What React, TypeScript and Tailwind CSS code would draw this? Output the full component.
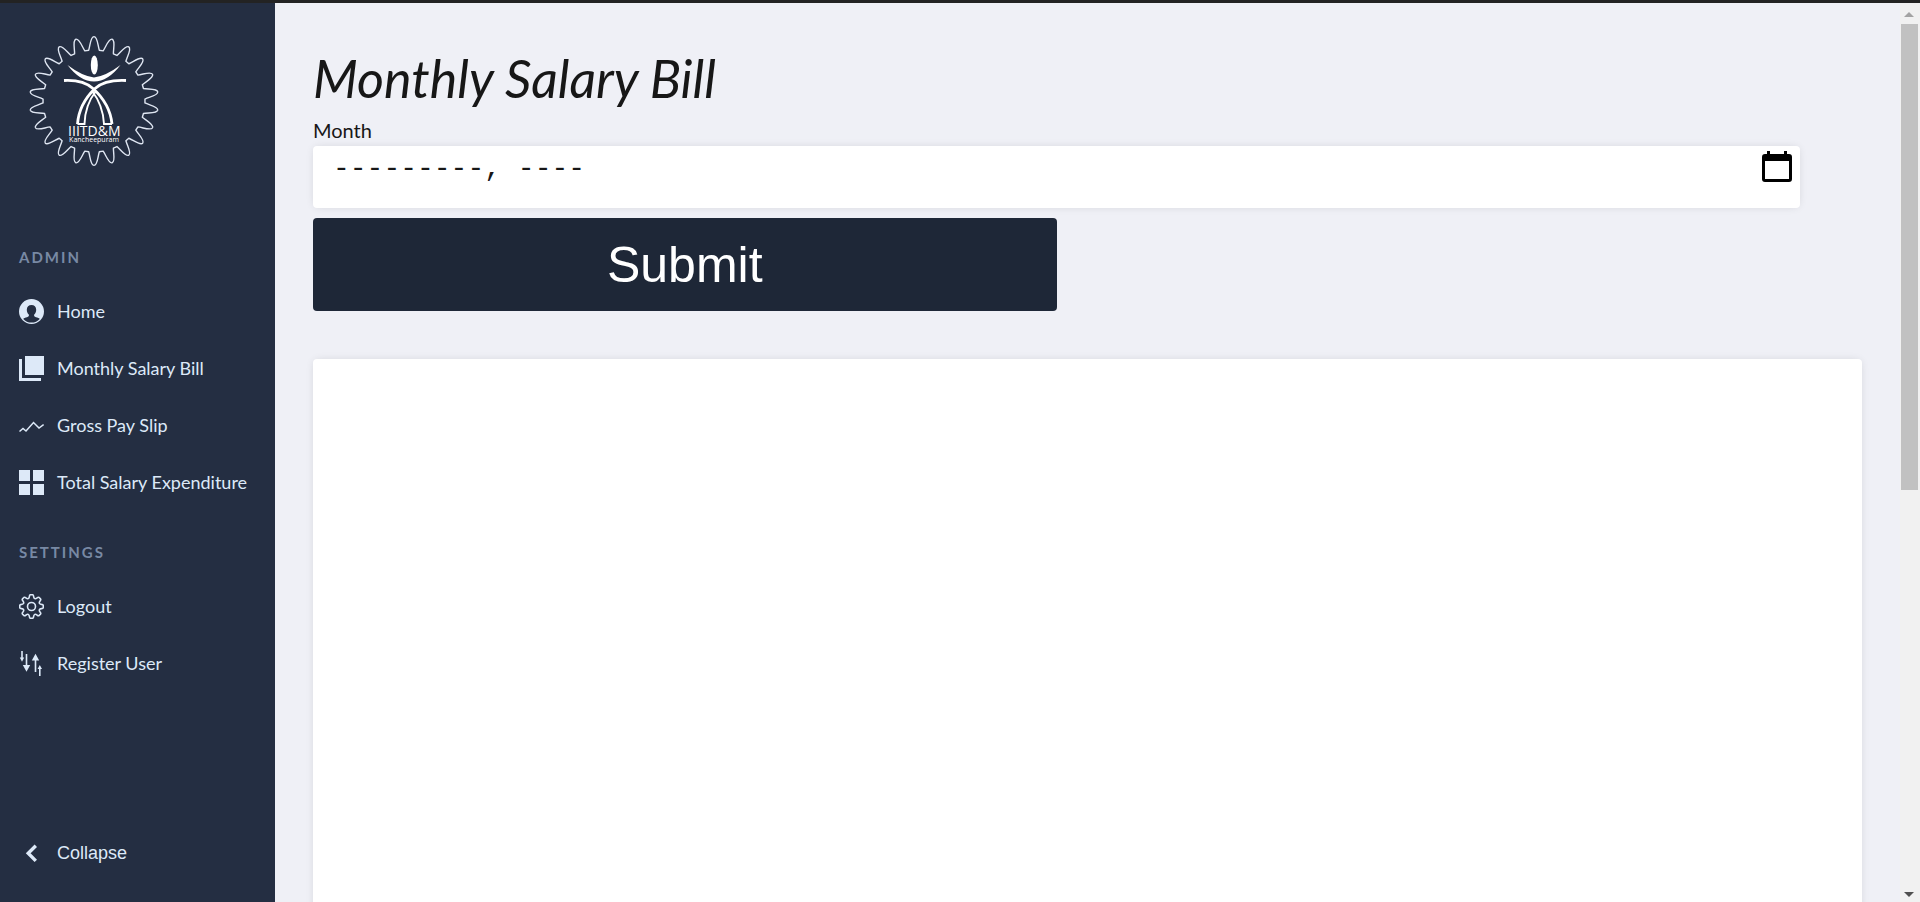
import type { ReactNode } from "react";

function polar(c: number, deg: number, r: number) {
  const a = ((deg - 90) * Math.PI) / 180;
  return `${(c + r * Math.cos(a)).toFixed(2)} ${(c + r * Math.sin(a)).toFixed(2)}`;
}

function sprocketPath() {
  const teeth = 22;
  const parts: string[] = [];
  for (let i = 0; i < teeth; i++) {
    const a = (i * 360) / teeth;
    parts.push(`${i === 0 ? "M" : "L"}${polar(66, a - 6, 51)}`);
    parts.push(`C${polar(66, a - 3.8, 56)} ${polar(66, a - 3.2, 64.4)} ${polar(66, a, 64.4)}`);
    parts.push(`C${polar(66, a + 3.2, 64.4)} ${polar(66, a + 3.8, 56)} ${polar(66, a + 6, 51)}`);
  }
  return parts.join("") + "Z";
}

function cogPath() {
  const parts: string[] = [];
  for (let i = 0; i < 8; i++) {
    const a = i * 45;
    parts.push(`${i === 0 ? "M" : "L"}${polar(12.5, a - 12, 10.2)}`);
    parts.push(`Q${polar(12.5, a - 10, 11.8)} ${polar(12.5, a - 5, 11.8)}`);
    parts.push(`L${polar(12.5, a + 5, 11.8)}`);
    parts.push(`Q${polar(12.5, a + 10, 11.8)} ${polar(12.5, a + 12, 10.2)}`);
    parts.push(`Q${polar(12.5, a + 22.5, 7)} ${polar(12.5, a + 33, 10.2)}`);
  }
  return parts.join("") + "Z";
}

function Logo() {
  return (
    <svg viewBox="0 0 132 132" className="block size-[132px]" role="img" aria-label="IIITD&M Kancheepuram">
      <path d={sprocketPath()} fill="none" stroke="#dfe6f2" strokeWidth="1.4" strokeLinejoin="round" />
      <g fill="#fff">
        <ellipse cx="66.300" cy="30" rx="3.500" ry="9.600" />
        <path d="M39.500 30Q54 41 66 42.500Q78 41 92.500 30Q80 46.500 66 46.500Q52 46.500 39.500 30Z" />
      </g>
      <g fill="none" stroke="#fff">
        <path d="M36 45.500Q55 44.500 65 53.500Q82 69 84 89" strokeWidth="2.800" />
        <path d="M98 45.500Q77 44.500 67 53.500Q51 69 49.500 89" strokeWidth="2.800" />
        <path d="M64 56Q75 70 76 89H84M68 56Q57 70 56.500 89H49.500" strokeWidth="1.900" />
      </g>
      <g fill="#fff" fontFamily="'Open Sans', 'Noto Sans', sans-serif" textAnchor="middle">
        <text x="66.300" y="101" fontSize="14">IIITD&amp;M</text>
        <text x="66" y="107" fontSize="7">Kancheepuram</text>
      </g>
    </svg>
  );
}

function Icon({ children }: { children: ReactNode }) {
  return (
    <svg viewBox="0 0 25 25" className="block size-[25px] shrink-0" fill="currentColor" aria-hidden="true">
      {children}
    </svg>
  );
}

const UserIcon = () => (
  <Icon>
    <path
      fillRule="evenodd"
      d="M12.500 0a12.500 12.500 0 1 0 0 25a12.500 12.500 0 0 0 0-25ZM12.500 6C9.700 6 7.800 8 7.800 10.800C7.800 12.900 8.600 14.500 9.800 15.600C10.300 17.300 9.500 17.800 8 18.200C6.300 18.600 4.800 19 4.300 19.900C6.300 22.300 9.200 23.600 12.500 23.600S18.700 22.300 20.700 19.900C20.200 19 18.700 18.600 17 18.200C15.500 17.800 14.700 17.300 15.200 15.600C16.400 14.500 17.200 12.900 17.200 10.800C17.200 8 15.300 6 12.500 6Z"
    />
  </Icon>
);

const CollectionIcon = () => (
  <Icon>
    <path d="M6 0H25V19H6ZM0 3H3V22H22V25H0Z" />
  </Icon>
);

const TrendIcon = () => (
  <Icon>
    <path d="M.500 18.500L4 15.500L7 18L14.500 9.500L20 15L24.600 11.500" fill="none" stroke="currentColor" strokeWidth="1.500" />
  </Icon>
);

const TilesIcon = () => (
  <Icon>
    <path d="M0 0H11V11H0ZM14 0H25V11H14ZM0 14H11V25H0ZM14 14H25V25H14Z" />
  </Icon>
);

const CogIcon = () => (
  <Icon>
    <g fill="none" stroke="currentColor" strokeWidth="1.600" strokeLinejoin="round">
      <path d={cogPath()} />
      <circle cx="12.500" cy="12.500" r="4" />
    </g>
  </Icon>
);

const ArrowsIcon = () => (
  <Icon>
    <path d="M2.200 0H3.800V6.500H5.200L3 10.800L.800 6.500H2.200ZM6.700 3H8.300V14H11.200L7.500 20.800L3.800 14H6.700ZM16.500 2.800L20.200 9.500H17.300V21H15.700V9.500H12.800ZM20.800 14L23 18H21.600V25H20V18H18.600Z" />
  </Icon>
);

const ChevronIcon = () => (
  <Icon>
    <path d="M16.800 4.700L9.200 12.300L16.800 19.900" fill="none" stroke="currentColor" strokeWidth="3.400" />
  </Icon>
);

type Item = { label: string; icon: ReactNode };

const admin: Item[] = [
  { label: "Home", icon: <UserIcon /> },
  { label: "Monthly Salary Bill", icon: <CollectionIcon /> },
  { label: "Gross Pay Slip", icon: <TrendIcon /> },
  { label: "Total Salary Expenditure", icon: <TilesIcon /> },
];

const settings: Item[] = [
  { label: "Logout", icon: <CogIcon /> },
  { label: "Register User", icon: <ArrowsIcon /> },
];

function Section({ title, items }: { title: string; items: Item[] }) {
  return (
    <section>
      <h3 className="text-[15px] leading-5 font-bold tracking-[2px] text-[#7889a4] uppercase">{title}</h3>
      <ul className="mt-4">
        {items.map((item) => (
          <li key={item.label}>
            <a href="#" className="flex h-[57px] items-center gap-[13px] text-lg whitespace-nowrap">
              {item.icon}
              <span className="pb-0.5">{item.label}</span>
            </a>
          </li>
        ))}
      </ul>
    </section>
  );
}

function Scrollbar() {
  return (
    <div className="flex w-5 shrink-0 flex-col items-center justify-between bg-[#f1f1f1] pt-[9px] pr-0.5 pb-[5px]" aria-hidden="true">
      <div className="flex h-[54%] w-full flex-col items-center">
        <svg viewBox="0 0 10 5" className="h-[5px] w-[10px] shrink-0">
          <path d="M0 5L5 0L10 5Z" fill="#a3a3a3" />
        </svg>
        <div className="mt-[7px] w-[17px] grow bg-[#c1c1c1]" />
      </div>
      <svg viewBox="0 0 10 5" className="h-[5px] w-[10px] shrink-0">
        <path d="M0 0L5 5L10 0Z" fill="#505050" />
      </svg>
    </div>
  );
}

export default function App() {
  return (
    <div className="flex h-screen border-t-[3px] border-[#232323] bg-[#eff0f6] font-['Lato',sans-serif] text-[#171717]">
      <aside className="flex w-[275px] shrink-0 flex-col bg-[#242e42] px-[19px] pb-5 text-[#dde9f8]">
        <a href="#" className="mt-8 ml-[9px] w-fit">
          <Logo />
        </a>
        <nav className="mt-20 flex flex-col gap-[31px]">
          <Section title="Admin" items={admin} />
          <Section title="Settings" items={settings} />
        </nav>
        <button type="button" className="mt-auto flex h-[57px] items-center gap-[13px] font-['Liberation_Sans',Arial,sans-serif] text-lg">
          <ChevronIcon />
          <span className="pb-0.5">Collapse</span>
        </button>
      </aside>

      <main className="min-w-0 grow overflow-hidden p-[38px]">
        <h1 className="text-[52px] leading-[74px] italic">Monthly Salary Bill</h1>
        <form className="flex w-[96%] flex-col">
          <label htmlFor="month" className="text-xl leading-[31px]">
            Month
          </label>
          <div className="flex h-[62px] items-start rounded-sm bg-white pt-1 pr-[7px] pl-5 shadow-[0_0_10px_-2px_rgba(0,0,0,0.14)]">
            <input
              id="month"
              type="text"
              placeholder="---------, ----"
              className="h-[37px] min-w-0 grow bg-transparent font-['Liberation_Mono',monospace] text-[28px] outline-none placeholder:text-[#171717]"
            />
            <button type="button" aria-label="Open month picker">
              <svg viewBox="0 0 32 34" className="block h-[34px] w-8" aria-hidden="true">
                <path
                  fillRule="evenodd"
                  d="M6 1H9V4H23V1H26V4H28Q31 4 31 7V29Q31 32 28 32H4Q1 32 1 29V7Q1 4 4 4H6ZM4 11V29H28V11Z"
                />
              </svg>
            </button>
          </div>
          <button
            type="submit"
            className="mt-[10px] h-[93px] w-1/2 rounded-sm bg-[#1e2737] pt-0.5 font-['Liberation_Sans',Arial,sans-serif] text-[50px] text-white"
          >
            Submit
          </button>
        </form>
        <section className="mt-12 min-h-screen rounded-sm bg-white shadow-[0_0_10px_-2px_rgba(0,0,0,0.14)]" />
      </main>

      <Scrollbar />
    </div>
  );
}
